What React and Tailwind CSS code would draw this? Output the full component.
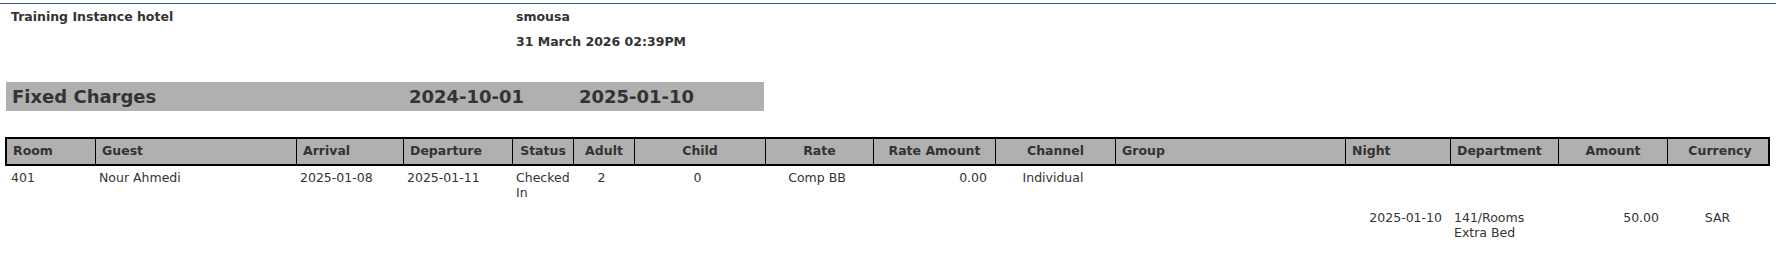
import React from 'react';

const columns = [
  { label: 'Room', head: 'text-left' },
  { label: 'Guest', head: 'text-left' },
  { label: 'Arrival', head: 'text-left' },
  { label: 'Departure', head: 'text-left' },
  { label: 'Status', head: 'text-center' },
  { label: 'Adult', head: 'text-center' },
  { label: 'Child', head: 'text-center' },
  { label: 'Rate', head: 'text-center' },
  { label: 'Rate Amount', head: 'text-center' },
  { label: 'Channel', head: 'text-center' },
  { label: 'Group', head: 'text-left' },
  { label: 'Night', head: 'text-left' },
  { label: 'Department', head: 'text-left' },
  { label: 'Amount', head: 'text-center' },
  { label: 'Currency', head: 'text-center' },
];

const gridCols =
  'grid grid-cols-[88px_201px_107px_109px_61px_61px_131px_108px_122px_120px_230px_105px_108px_109px_105px]';

// booking line, then the charge posted against it
const bookingRow = [
  { text: '401', align: 'text-left' },
  { text: 'Nour Ahmedi', align: 'text-left' },
  { text: '2025-01-08', align: 'text-left' },
  { text: '2025-01-11', align: 'text-left' },
  { text: 'Checked In', align: 'text-left' },
  { text: '2', align: 'text-center' },
  { text: '0', align: 'text-center' },
  { text: 'Comp BB', align: 'text-center' },
  { text: '0.00', align: 'text-right' },
  { text: 'Individual', align: 'text-center' },
  { text: '', align: 'text-left' },
  { text: '', align: 'text-left' },
  { text: '', align: 'text-left' },
  { text: '', align: 'text-left' },
  { text: '', align: 'text-left' },
];

const chargeRow = [
  { text: '', align: 'text-left' },
  { text: '', align: 'text-left' },
  { text: '', align: 'text-left' },
  { text: '', align: 'text-left' },
  { text: '', align: 'text-left' },
  { text: '', align: 'text-left' },
  { text: '', align: 'text-left' },
  { text: '', align: 'text-left' },
  { text: '', align: 'text-left' },
  { text: '', align: 'text-left' },
  { text: '', align: 'text-left' },
  { text: '2025-01-10', align: 'text-right' },
  { text: '141/Rooms Extra Bed', align: 'text-left' },
  { text: '50.00', align: 'text-right' },
  { text: 'SAR', align: 'text-center' },
];

const DataRow = ({ cells }) => (
  <div className={`${gridCols} pt-[4px] pb-[6px]`}>
    {cells.map((cell, i) => (
      <div key={i} className={`px-[6px] leading-[15px] ${cell.align}`}>
        {cell.text}
      </div>
    ))}
  </div>
);

const App = () => {
  return (
    <div className="min-h-[260px] bg-white text-[#333] text-[12.5px] font-['DejaVu_Sans',sans-serif]">
      <div className="pt-[3px]">
        <div className="h-px bg-[#2d5a9b]" />
      </div>

      {/* Report header */}
      <div className="flex pt-[5px] font-bold leading-[15px]">
        <div className="w-[516px] pl-[11px]">Training Instance hotel</div>
        <div className="flex flex-col gap-[10px]">
          <div>smousa</div>
          <div>31 March 2026 02:39PM</div>
        </div>
      </div>

      {/* Section band */}
      <div className="ml-[6px] mt-[33px] flex h-[29px] w-[758px] items-center bg-[#b0b0b0] pl-[6px] text-[18px] font-bold">
        <div className="w-[397px]">Fixed Charges</div>
        <div className="w-[170px]">2024-10-01</div>
        <div>2025-01-10</div>
      </div>

      {/* Charges table */}
      <div className="ml-[5px] mt-[26px] w-[1765px]">
        <div className={`${gridCols} border-2 border-black bg-[#b0b0b0] font-bold`}>
          {columns.map((col, i) => (
            <div
              key={col.label}
              className={`px-[6px] pt-[4px] pb-[6px] leading-[15px] ${col.head} ${i > 0 ? 'border-l border-black' : ''}`}
            >
              {col.label}
            </div>
          ))}
        </div>
        <DataRow cells={bookingRow} />
        <DataRow cells={chargeRow} />
      </div>
    </div>
  );
};

export default App;
